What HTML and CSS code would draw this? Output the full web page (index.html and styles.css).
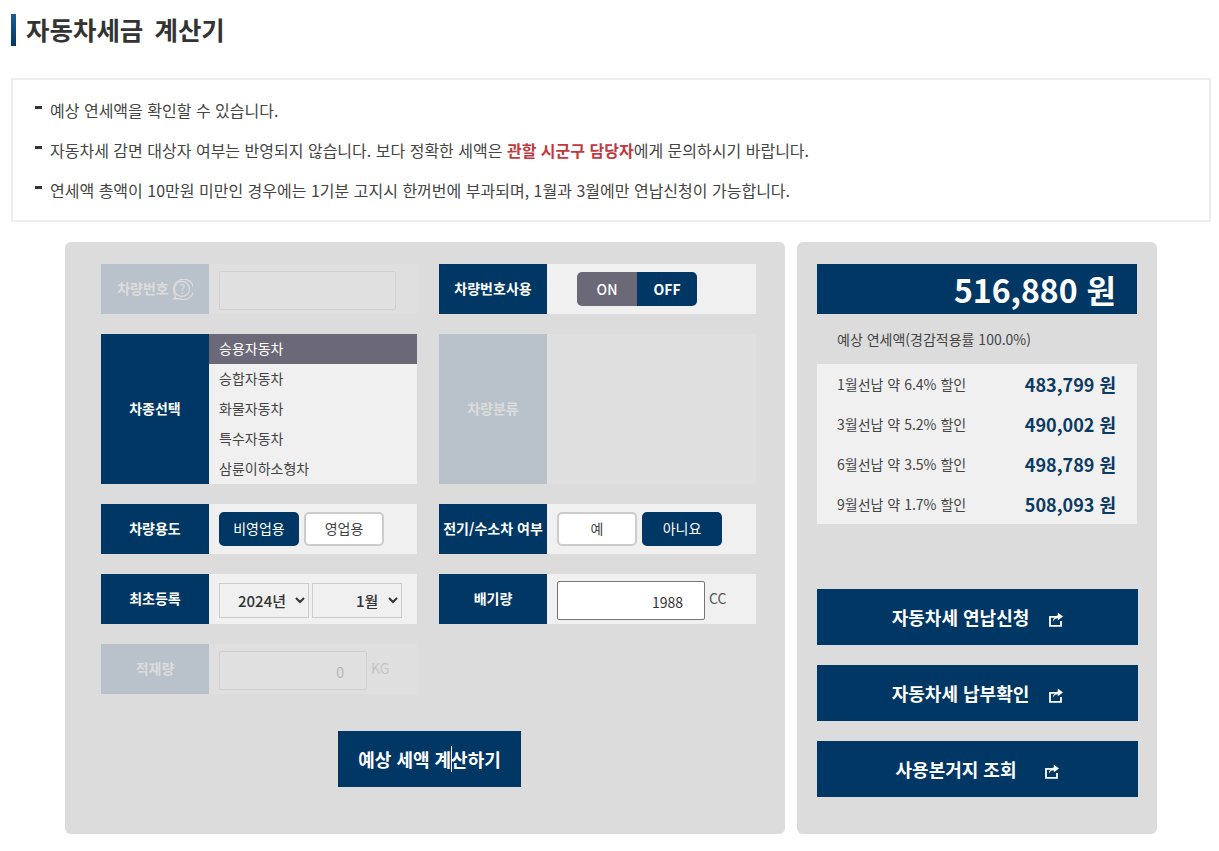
FILE: index.html
```html
<!DOCTYPE html>
<html lang="ko">
<head>
<meta charset="utf-8">
<title>자동차세금 계산기</title>
<link rel="stylesheet" href="styles.css">
</head>
<body>
<h1 class="title">자동차세금 계산기</h1>
<ul class="notice">
  <li>예상 연세액을 확인할 수 있습니다.</li>
  <li>자동차세 감면 대상자 여부는 반영되지 않습니다. 보다 정확한 세액은 <strong>관할 시군구 담당자</strong>에게 문의하시기 바랍니다.</li>
  <li>연세액 총액이 10만원 미만인 경우에는 1기분 고지시 한꺼번에 부과되며, 1월과 3월에만 연납신청이 가능합니다.</li>
</ul>
<main class="layout">
  <section class="panel form-panel">
    <div class="form-grid">
      <div class="row row-off">
        <div class="label">차량번호
          <span class="help">
            <svg class="help-ring" viewBox="1 1 19 19" width="21" height="21" aria-hidden="true">
              <path d="M4.500 16.300A9.200 9.200 0 1 1 8 18.900H2.800Z" fill="none" stroke="#dcdcdc" stroke-width="1.200"/>
              <circle cx="10" cy="10" r="6.800" fill="none" stroke="#dcdcdc" stroke-width="1.200"/>
            </svg>
            <span class="help-mark">?</span>
          </span>
        </div>
        <div class="value"><input class="field field-plate" disabled></div>
      </div>
      <div class="row">
        <div class="label">차량번호사용</div>
        <div class="value value-toggle">
          <div class="toggle"><span class="toggle-on">ON</span><span class="toggle-off">OFF</span></div>
        </div>
      </div>
      <div class="row row-tall">
        <div class="label">차종선택</div>
        <ul class="types">
          <li class="selected">승용자동차</li>
          <li>승합자동차</li>
          <li>화물자동차</li>
          <li>특수자동차</li>
          <li>삼륜이하소형차</li>
        </ul>
      </div>
      <div class="row row-tall row-off">
        <div class="label">차량분류</div>
        <div class="value"></div>
      </div>
      <div class="row">
        <div class="label">차량용도</div>
        <div class="value choices">
          <button class="choice active">비영업용</button>
          <button class="choice">영업용</button>
        </div>
      </div>
      <div class="row">
        <div class="label">전기/수소차 여부</div>
        <div class="value choices">
          <button class="choice">예</button>
          <button class="choice active">아니요</button>
        </div>
      </div>
      <div class="row">
        <div class="label">최초등록</div>
        <div class="value selects">
          <select class="sel sel-year"><option>2024년</option></select>
          <select class="sel sel-month"><option>1월</option></select>
        </div>
      </div>
      <div class="row">
        <div class="label">배기량</div>
        <div class="value with-unit">
          <input class="field field-cc" value="1988"><span class="unit">CC</span>
        </div>
      </div>
      <div class="row row-off">
        <div class="label">적재량</div>
        <div class="value with-unit">
          <input class="field field-kg" value="0" disabled><span class="unit">KG</span>
        </div>
      </div>
    </div>
    <div class="calc-wrap">
      <button class="calc">예상 세액 계산하기<span class="cursor"></span></button>
    </div>
  </section>
  <aside class="panel result-panel">
    <div class="total">516,880 원</div>
    <p class="total-note">예상 연세액(경감적용률 100.0%)</p>
    <ul class="discounts">
      <li><span>1월선납 약 6.4% 할인</span><b>483,799 원</b></li>
      <li><span>3월선납 약 5.2% 할인</span><b>490,002 원</b></li>
      <li><span>6월선납 약 3.5% 할인</span><b>498,789 원</b></li>
      <li><span>9월선납 약 1.7% 할인</span><b>508,093 원</b></li>
    </ul>
    <div class="links">
      <a class="link">자동차세 연납신청
        <svg class="share" viewBox="0 0 14 15" width="14" height="15" aria-hidden="true"><path d="M7 4.800H1v9h11V9" fill="none" stroke="#fff" stroke-width="1.800"/><path d="M8.800 0.500 14 4.400 8.800 8.300V6.200C6.700 6.100 5 7.200 4 9.800 4 6.600 5.800 3.900 8.800 3.400Z" fill="#fff"/></svg>
      </a>
      <a class="link">자동차세 납부확인
        <svg class="share" viewBox="0 0 14 15" width="14" height="15" aria-hidden="true"><path d="M7 4.800H1v9h11V9" fill="none" stroke="#fff" stroke-width="1.800"/><path d="M8.800 0.500 14 4.400 8.800 8.300V6.200C6.700 6.100 5 7.200 4 9.800 4 6.600 5.800 3.900 8.800 3.400Z" fill="#fff"/></svg>
      </a>
      <a class="link link-wide">사용본거지 조회
        <svg class="share" viewBox="0 0 14 15" width="14" height="15" aria-hidden="true"><path d="M7 4.800H1v9h11V9" fill="none" stroke="#fff" stroke-width="1.800"/><path d="M8.800 0.500 14 4.400 8.800 8.300V6.200C6.700 6.100 5 7.200 4 9.800 4 6.600 5.800 3.900 8.800 3.400Z" fill="#fff"/></svg>
      </a>
    </div>
  </aside>
</main>
</body>
</html>
```
FILE: styles.css
```css
* { box-sizing: border-box; }
html, body { margin: 0; padding: 0; }
body {
  background: #fff;
  color: #333;
  font-family: "Noto Sans CJK KR", "Noto Sans", sans-serif;
  font-size: 14px;
  height: 851px;
  overflow: hidden;
}
ul { list-style: none; margin: 0; padding: 0; }
button, input, select { font-family: inherit; }

.title {
  margin: 14px 0 0 11px;
  height: 32px;
  padding-left: 10px;
  border-left: 5px solid #003764;
  border-image: linear-gradient(#1c5f96, #003764) 1;
  font-size: 25.5px;
  line-height: 30px;
  font-weight: 700;
  color: #333;
  word-spacing: 4px;
}

.notice {
  margin: 32px 0 0 11px;
  width: 1200px;
  height: 144px;
  border: 2px solid #eee;
  padding: 10px 0 0 22px;
}
.notice li {
  position: relative;
  height: 40px;
  line-height: 40px;
  padding-left: 15px;
  font-size: 16px;
  color: #444;
}
.notice li::before {
  content: "";
  position: absolute;
  left: 0;
  top: 16px;
  width: 7px;
  height: 3px;
  background: #333;
}
.notice strong { color: #c0393f; font-weight: 700; }

.layout {
  display: flex;
  gap: 12px;
  margin: 20px 0 0 65px;
}
.panel {
  background: #dcdcdc;
  border-radius: 6px;
  height: 592px;
}
.form-panel { width: 720px; padding: 22px 29px 0 36px; }
.result-panel { width: 360px; padding: 22px 19px 0 20px; }

.form-grid {
  display: grid;
  grid-template-columns: 316px 317px;
  column-gap: 22px;
  row-gap: 20px;
}
.row { display: flex; height: 50px; }
.row-tall { height: 150px; }
.label {
  flex: 0 0 108px;
  display: flex;
  align-items: center;
  justify-content: center;
  padding-bottom: 2px;
  background: #003764;
  color: #fff;
  font-size: 14px;
  font-weight: 700;
  white-space: nowrap;
}
.value {
  flex: 1;
  background: #f0f0f0;
  display: flex;
  align-items: center;
  padding-left: 10px;
}
.value-toggle { padding-left: 30px; }
.row-off .label { background: #b9c2cb; color: #dcdcdc; }
.row-off .value { background: #dfdfdf; }

.help {
  position: relative;
  display: block;
  width: 21px;
  height: 21px;
  margin-left: 3px;
  margin-top: 3px;
}
.help-ring { display: block; }
.help-mark {
  position: absolute;
  left: 0;
  right: 0;
  top: 0;
  text-align: center;
  font-size: 13px;
  line-height: 20px;
  color: #dcdcdc;
  font-weight: 400;
}

.field {
  display: block;
  border: 1px solid #767676;
  border-radius: 2px;
  background: #fff;
  color: #333;
  font-size: 14px;
  text-align: right;
  outline: none;
}
.field:disabled { background: #e0e0e0; border-color: #d0d0d0; color: #b5b5b5; }
.field-plate { width: 177px; height: 39px; margin-top: 3px; }
.field-cc { width: 148px; height: 39px; padding: 3px 21px 0 0; margin-top: 3px; }
.field-kg { width: 148px; height: 39px; padding: 3px 22px 0 0; margin-top: 3px; }
.with-unit { gap: 4px; }
.unit { font-size: 14px; color: #555; margin-top: -3px; }
.row-off .unit { color: #c4c4c4; }

.toggle {
  display: flex;
  width: 120px;
  height: 34px;
  border-radius: 5px;
  overflow: hidden;
  margin-top: -1px;
  font-size: 14px;
  line-height: 34px;
  text-align: center;
  color: #fff;
}
.toggle-on { width: 60px; background: #6b6878; font-weight: 500; }
.toggle-off { width: 60px; background: #003764; font-weight: 700; }

.types { flex: 1; background: #f0f0f0; }
.types li {
  height: 30px;
  line-height: 28px;
  padding-left: 10px;
  font-size: 14px;
  color: #444;
}
.types .selected { background: #6b6878; color: #fff; }

.choices { gap: 5px; }
.choice {
  width: 80px;
  height: 34px;
  border-radius: 5px;
  border: 2px solid #ccc;
  background: #fff;
  color: #444;
  font-size: 14px;
  padding: 0 0 2px;
}
.choice.active { background: #003764; border-color: #003764; color: #fff; }

.selects { gap: 3px; padding-top: 2px; }
.sel {
  width: 90px;
  height: 35px;
  border: 1px solid #ccc;
  background: #f0f0f0;
  color: #333;
  font-size: 15px;
  font-weight: 500;
  outline: none;
  padding-left: 14px;
}
.sel-month { padding-left: 39px; }

.calc-wrap { display: flex; justify-content: center; margin: 37px 0 0 2px; }
.calc {
  position: relative;
  width: 183px;
  height: 56px;
  border: 0;
  padding: 0;
  background: #003764;
  color: #fff;
  font-size: 18px;
  font-weight: 700;
}
.cursor {
  position: absolute;
  left: 113px;
  top: 15px;
  width: 1px;
  height: 26px;
  background: #fff;
}

.total {
  width: 320px;
  height: 50px;
  background: #003764;
  color: #fff;
  text-align: right;
  padding-right: 21px;
  font-size: 32px;
  line-height: 50px;
  font-weight: 700;
}
.total-note {
  margin: 0;
  height: 50px;
  line-height: 50px;
  padding: 0 0 0 20px;
  font-size: 14px;
  color: #444;
}
.discounts { width: 320px; background: #f0f0f0; }
.discounts li {
  display: flex;
  align-items: center;
  justify-content: space-between;
  height: 40px;
  padding: 0 21px 0 20px;
  font-size: 14px;
  color: #444;
}
.discounts b { font-size: 18px; font-weight: 700; color: #0b3a63; }

.links { display: flex; flex-direction: column; gap: 20px; margin-top: 65px; }
.link {
  display: flex;
  align-items: center;
  justify-content: center;
  gap: 20px;
  height: 56px;
  width: 321px;
  background: #003764;
  color: #fff;
  font-size: 18px;
  font-weight: 700;
}
.link-wide { gap: 29px; }
.share { margin-top: 5px; }
```
